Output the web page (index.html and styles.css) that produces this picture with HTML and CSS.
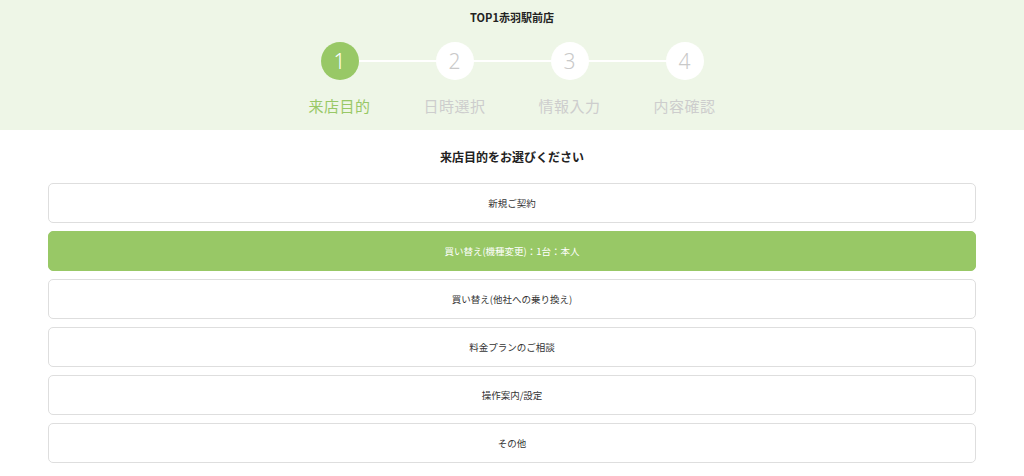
FILE: index.html
```html
<!DOCTYPE html>
<html lang="ja">
<head>
<meta charset="utf-8">
<title>来店予約</title>
<link rel="stylesheet" href="styles.css">
</head>
<body>
<header class="header">
  <h1 class="shop">TOP1赤羽駅前店</h1>
  <ol class="steps">
    <li class="step active"><span class="num">1</span><span class="label">来店目的</span></li>
    <li class="step"><span class="num">2</span><span class="label">日時選択</span></li>
    <li class="step"><span class="num">3</span><span class="label">情報入力</span></li>
    <li class="step"><span class="num">4</span><span class="label">内容確認</span></li>
  </ol>
</header>
<main class="main">
  <h2 class="title">来店目的をお選びください</h2>
  <div class="options">
    <button class="option">新規ご契約</button>
    <button class="option selected">買い替え(機種変更)：1台：本人</button>
    <button class="option">買い替え(他社への乗り換え)</button>
    <button class="option">料金プランのご相談</button>
    <button class="option">操作案内/設定</button>
    <button class="option">その他</button>
  </div>
</main>
</body>
</html>
```

FILE: styles.css
```css
* { box-sizing: border-box; }
html, body { margin: 0; padding: 0; }
body {
  font-family: "Noto Sans CJK JP", "Noto Sans", sans-serif;
  color: #333;
  background: #fff;
}
.header {
  background: #eef6e7;
  height: 130px;
  padding-top: 9px;
}
.shop {
  margin: 0;
  text-align: center;
  font-size: 11px;
  font-weight: 700;
  line-height: 16px;
  color: #222;
}
.steps {
  list-style: none;
  margin: 17px auto 0;
  padding: 0;
  display: grid;
  grid-template-columns: repeat(4, 115px);
  justify-content: center;
}
.step {
  position: relative;
  display: flex;
  flex-direction: column;
  align-items: center;
}
.step + .step::before {
  content: "";
  position: absolute;
  top: 18px;
  left: -58px;
  width: 116px;
  height: 2px;
  background: #fff;
}
.num {
  position: relative;
  z-index: 1;
  width: 38px;
  height: 38px;
  border-radius: 50%;
  background: #fff;
  color: #c9c9c9;
  font-family: "Noto Sans", sans-serif;
  font-weight: 300;
  font-size: 21px;
  line-height: 38px;
  text-align: center;
}
.label {
  margin-top: 15px;
  font-size: 15px;
  line-height: 22px;
  color: #cdcdcd;
  letter-spacing: 0.5px;
}
.step.active .num { background: #98c866; color: #fff; }
.step.active .label { color: #98c866; }
.main {
  padding: 18px 48px 0;
}
.title {
  margin: 0 0 17px;
  text-align: center;
  font-size: 12px;
  font-weight: 700;
  line-height: 18px;
  color: #222;
}
.options {
  display: flex;
  flex-direction: column;
  gap: 8px;
}
.option {
  display: block;
  width: 100%;
  height: 40px;
  border: 1px solid #dedede;
  border-radius: 5px;
  background: #fff;
  color: #333;
  font-family: "Noto Sans CJK JP", "Noto Sans", sans-serif;
  font-size: 9.5px;
  text-align: center;
  padding: 0;
  cursor: pointer;
}
.option.selected {
  background: #98c866;
  border-color: #98c866;
  color: #fff;
}
```
